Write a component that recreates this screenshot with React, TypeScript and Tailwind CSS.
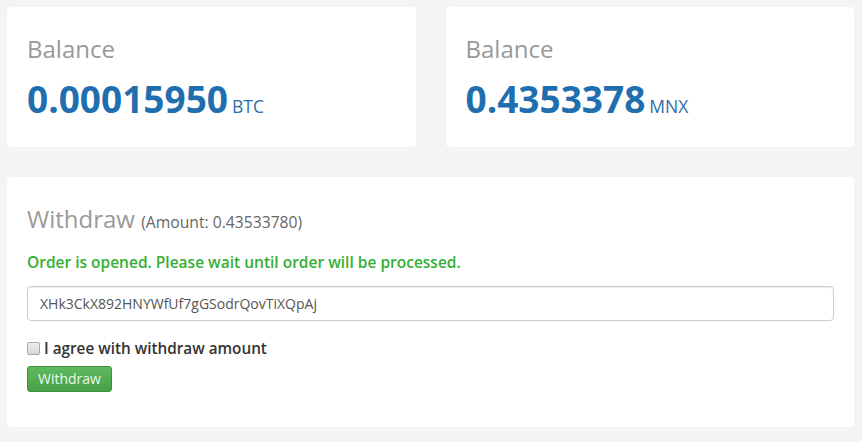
import { useState } from "react";

function BalanceCard({ amount, unit }: { amount: string; unit: string }) {
  return (
    <div className="flex-1 bg-white rounded-[4px] h-[140px] px-5 pt-[28px]">
      <h3 className="text-[24px] leading-[28px] text-[#999999]">Balance</h3>
      <div className="mt-[15px] flex items-baseline">
        <span className="text-[37px] leading-[42px] font-bold text-[#1f6fb0]">{amount}</span>
        <span className="ml-[4px] text-[17.5px] text-[#2d6ea8]">{unit}</span>
      </div>
    </div>
  );
}

export default function App() {
  const [agree, setAgree] = useState(false);
  const [address, setAddress] = useState("XHk3CkX892HNYWfUf7gGSodrQovTiXQpAj");

  return (
    <div className="w-[862px] h-[442px] bg-[#f4f4f4] pl-[7px] pr-[8px] pt-[7px] font-['Open_Sans',sans-serif]">
      {/* Balances */}
      <div className="flex gap-[30px]">
        <BalanceCard amount="0.00015950" unit="BTC" />
        <BalanceCard amount="0.4353378" unit="MNX" />
      </div>

      {/* Withdraw */}
      <div className="mt-[30px] bg-white rounded-[4px] h-[250px] px-5 pt-[28px]">
        <h3 className="text-[24px] leading-[28px] text-[#999999]">
          Withdraw <span className="text-[15.7px] text-[#666666]">(Amount: 0.43533780)</span>
        </h3>
        <p className="mt-[15px] text-[15.5px] leading-[22px] font-semibold text-[#33b033]">
          Order is opened. Please wait until order will be processed.
        </p>
        <input
          value={address}
          onChange={(e) => setAddress(e.target.value)}
          className="mt-[13px] block w-full h-[35px] px-3 text-[14px] text-[#555555] border border-[#cccccc] rounded-[4px] shadow-[inset_0_1px_1px_rgba(0,0,0,0.075)] outline-none"
        />
        <label className="mt-[16px] flex items-center gap-[4px] text-[15.3px] leading-[22px] font-semibold text-[#333333]">
          <input
            type="checkbox"
            checked={agree}
            onChange={(e) => setAgree(e.target.checked)}
            className="appearance-none w-[13px] h-[13px] m-0 rounded-[2px] border border-[#a9a9a9] bg-gradient-to-b from-[#f0f0f0] to-[#d6d6d6] checked:bg-[#3b82f6]"
          />
          I agree with withdraw amount
        </label>
        <button className="mt-[7px] block h-[26px] px-[10px] text-[14px] leading-[20px] text-[#eaf6ea] rounded-[3px] border border-[#3e8f3e] bg-gradient-to-b from-[#5fba5f] to-[#46a046]">
          Withdraw
        </button>
      </div>
    </div>
  );
}
